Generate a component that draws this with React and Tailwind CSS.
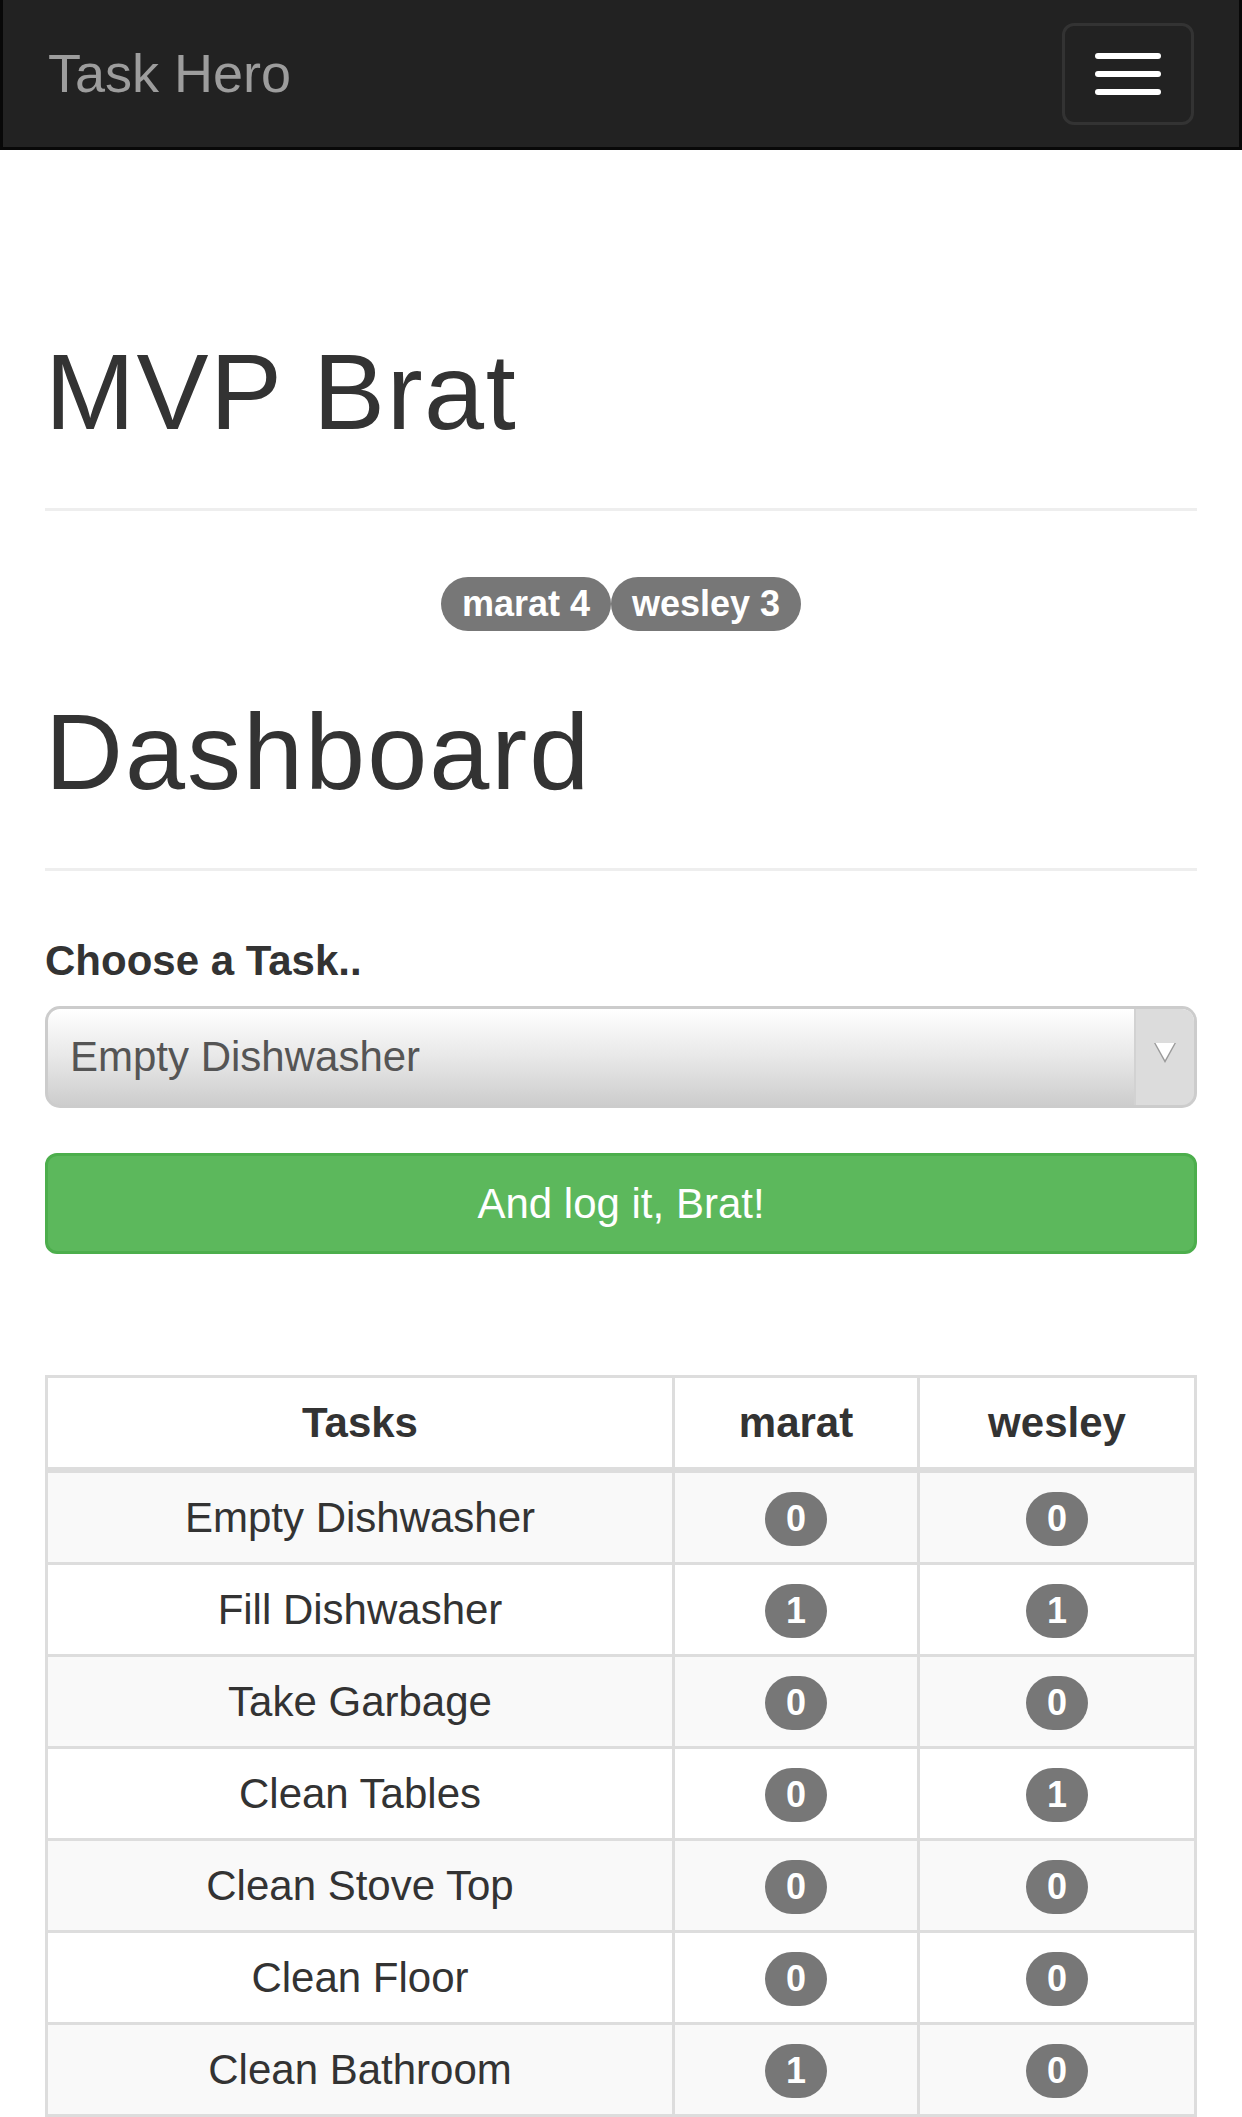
// Task Hero - MVP Brat dashboard
import React from 'react';

const tasks = [
  { name: 'Empty Dishwasher', marat: 0, wesley: 0 },
  { name: 'Fill Dishwasher', marat: 1, wesley: 1 },
  { name: 'Take Garbage', marat: 0, wesley: 0 },
  { name: 'Clean Tables', marat: 0, wesley: 1 },
  { name: 'Clean Stove Top', marat: 0, wesley: 0 },
  { name: 'Clean Floor', marat: 0, wesley: 0 },
  { name: 'Clean Bathroom', marat: 1, wesley: 0 },
];

const Badge = ({ children }) => (
  <span className="inline-flex h-[54px] items-center justify-center rounded-full bg-[#777777] px-[21px] text-[36px] font-bold leading-none text-white">
    {children}
  </span>
);

const Navbar = () => (
  <nav className="flex h-[150px] items-start justify-between border-x-[3px] border-b-[3px] border-[#080808] bg-[#222222]">
    <a href="#" className="ml-[45px] mt-[46px] text-[54px] leading-[54px] text-[#9d9d9d]">
      Task Hero
    </a>
    <button className="mr-[45px] mt-[23px] flex h-[102px] w-[132px] flex-col items-center justify-center gap-[12px] rounded-[12px] border-[3px] border-[#333333] bg-[#222222]">
      <span className="block h-[6px] w-[66px] rounded-[3px] bg-white" />
      <span className="block h-[6px] w-[66px] rounded-[3px] bg-white" />
      <span className="block h-[6px] w-[66px] rounded-[3px] bg-white" />
    </button>
  </nav>
);

const TaskSelect = () => (
  <div className="flex h-[102px] w-full overflow-hidden rounded-[15px] border-[3px] border-[#cccccc] bg-linear-to-b from-white via-[#e8e8e8] to-[#cdcdcd]">
    <div className="flex flex-1 items-center pl-[22px] text-[42px] text-[#555555]">Empty Dishwasher</div>
    <div className="flex w-[60px] items-start justify-center border-l-[2px] border-[#d2d2d2] bg-[#dcdcdc] pt-[33px]">
      <svg width="24" height="22" viewBox="0 0 24 22">
        <polygon points="1,1 23,1 12,21" fill="#9a9a9a" />
        <polygon points="2.5,1 21.5,1 12,18" fill="#ffffff" />
      </svg>
    </div>
  </div>
);

const ScoreTable = () => (
  <div className="grid grid-cols-[630px_245px_277px] text-[42px] text-[#333333]">
    <div className="flex h-[98px] items-center justify-center border-x-[3px] border-t-[3px] border-b-[6px] border-[#dddddd] font-bold">Tasks</div>
    <div className="flex h-[98px] items-center justify-center border-r-[3px] border-t-[3px] border-b-[6px] border-[#dddddd] font-bold">marat</div>
    <div className="flex h-[98px] items-center justify-center border-r-[3px] border-t-[3px] border-b-[6px] border-[#dddddd] font-bold">wesley</div>
    {tasks.map((task, i) => {
      const bg = i % 2 === 0 ? 'bg-[#f9f9f9]' : 'bg-white';
      return (
        <React.Fragment key={task.name}>
          <div className={`flex h-[92px] items-center justify-center border-x-[3px] border-b-[3px] border-[#dddddd] ${bg}`}>{task.name}</div>
          <div className={`flex h-[92px] items-center justify-center border-r-[3px] border-b-[3px] border-[#dddddd] pt-[4px] ${bg}`}>
            <Badge>{task.marat}</Badge>
          </div>
          <div className={`flex h-[92px] items-center justify-center border-r-[3px] border-b-[3px] border-[#dddddd] pt-[4px] ${bg}`}>
            <Badge>{task.wesley}</Badge>
          </div>
        </React.Fragment>
      );
    })}
  </div>
);

const App = () => {
  return (
    <div className="min-h-screen bg-white font-['Liberation_Sans',Arial,sans-serif] text-[#333333]">
      <Navbar />
      <main className="px-[45px]">
        <div className="mt-[183px] border-b-[3px] border-[#eeeeee] pb-[56px]">
          <h1 className="text-[108px] leading-[1.1] tracking-[1.5px]">MVP Brat</h1>
        </div>

        <div className="mt-[66px] flex justify-center">
          <Badge>marat 4</Badge>
          <Badge>wesley 3</Badge>
        </div>

        <div className="mt-[62px] border-b-[3px] border-[#eeeeee] pb-[56px]">
          <h1 className="text-[108px] leading-[1.1] tracking-[2px]">Dashboard</h1>
        </div>

        <label className="mt-[60px] block text-[42px] font-bold leading-[60px]">Choose a Task..</label>
        <div className="mt-[15px]">
          <TaskSelect />
        </div>

        <button className="mt-[45px] flex h-[101px] w-full items-center justify-center rounded-[12px] border-[3px] border-[#4cae4c] bg-[#5cb85c] text-[42px] text-white">
          And log it, Brat!
        </button>

        <div className="mt-[121px]">
          <ScoreTable />
        </div>
      </main>
    </div>
  );
};

export default App;
